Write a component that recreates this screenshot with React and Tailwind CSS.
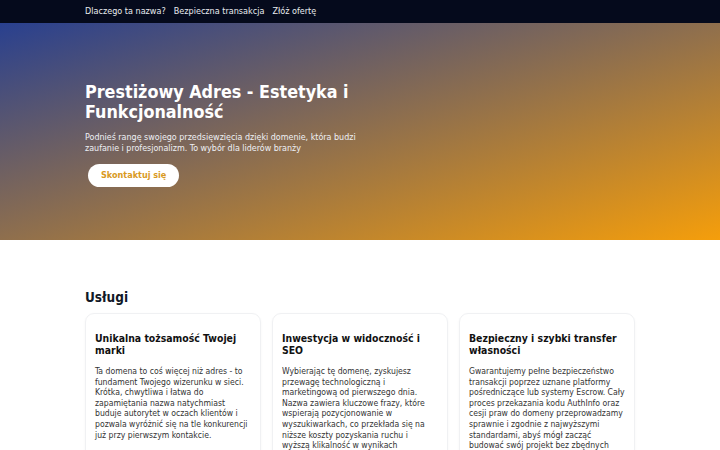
export default function App() {
  const cards = [
    {
      title: "Unikalna tożsamość Twojej marki",
      text: "Ta domena to coś więcej niż adres - to fundament Twojego wizerunku w sieci. Krótka, chwytliwa i łatwa do zapamiętania nazwa natychmiast buduje autorytet w oczach klientów i pozwala wyróżnić się na tle konkurencji już przy pierwszym kontakcie.",
    },
    {
      title: "Inwestycja w widoczność i SEO",
      text: "Wybierając tę domenę, zyskujesz przewagę technologiczną i marketingową od pierwszego dnia. Nazwa zawiera kluczowe frazy, które wspierają pozycjonowanie w wyszukiwarkach, co przekłada się na niższe koszty pozyskania ruchu i wyższą klikalność w wynikach wyszukiwania.",
    },
    {
      title: "Bezpieczny i szybki transfer własności",
      text: "Gwarantujemy pełne bezpieczeństwo transakcji poprzez uznane platformy pośredniczące lub systemy Escrow. Cały proces przekazania kodu AuthInfo oraz cesji praw do domeny przeprowadzamy sprawnie i zgodnie z najwyższymi standardami, abyś mógł zacząć budować swój projekt bez zbędnych opóźnień.",
    },
  ];

  return (
    <div className="h-[450px] overflow-hidden bg-white font-['DejaVu_Sans_Condensed','DejaVu_Sans',sans-serif]">
      {/* Nav */}
      <nav className="h-[23px] bg-[#050a1c] flex items-center">
        <div className="w-[550px] mx-auto flex gap-[8px] text-[9px] text-[#e8eaef]">
          <a>Dlaczego ta nazwa?</a>
          <a>Bezpieczna transakcja</a>
          <a>Złóż ofertę</a>
        </div>
      </nav>

      {/* Hero */}
      <header className="h-[217px] flex items-center bg-[linear-gradient(to_bottom_right,#29408f,#f59e0b)]">
        <div className="w-[550px] mx-auto pt-[6px]">
          <div className="w-[275px]">
            <h1 className="text-[17.8px] leading-[20px] font-bold text-white">
              Prestiżowy Adres - Estetyka i Funkcjonalność
            </h1>
            <p className="mt-[10px] text-[8.9px] leading-[10.5px] text-[#eef0f5]">
              Podnieś rangę swojego przedsięwzięcia dzięki domenie, która budzi zaufanie i profesjonalizm. To wybór dla liderów branży
            </p>
            <button className="mt-[11px] ml-[3px] h-[23px] px-[13px] rounded-full bg-white text-[9px] font-bold text-[#d99a1e]">
              Skontaktuj się
            </button>
          </div>
        </div>
      </header>

      {/* Services */}
      <section className="w-[550px] mx-auto pt-[48px]">
        <h2 className="text-[13.5px] font-bold text-[#111827] leading-[18px]">Usługi</h2>
        <div className="mt-[7px] grid grid-cols-3 gap-[11px]">
          {cards.map((c, i) => (
            <div
              key={i}
              className="rounded-[9px] border border-[#f0f1f3] shadow-[0_1px_3px_rgba(0,0,0,0.04)] px-[9px] pt-[19px] pb-[14px]"
            >
              <h3 className="text-[10.4px] leading-[11.5px] font-bold text-[#111]">{c.title}</h3>
              <p className="mt-[10px] text-[8.6px] leading-[10.6px] text-[#333]">{c.text}</p>
            </div>
          ))}
        </div>
      </section>
    </div>
  );
}
